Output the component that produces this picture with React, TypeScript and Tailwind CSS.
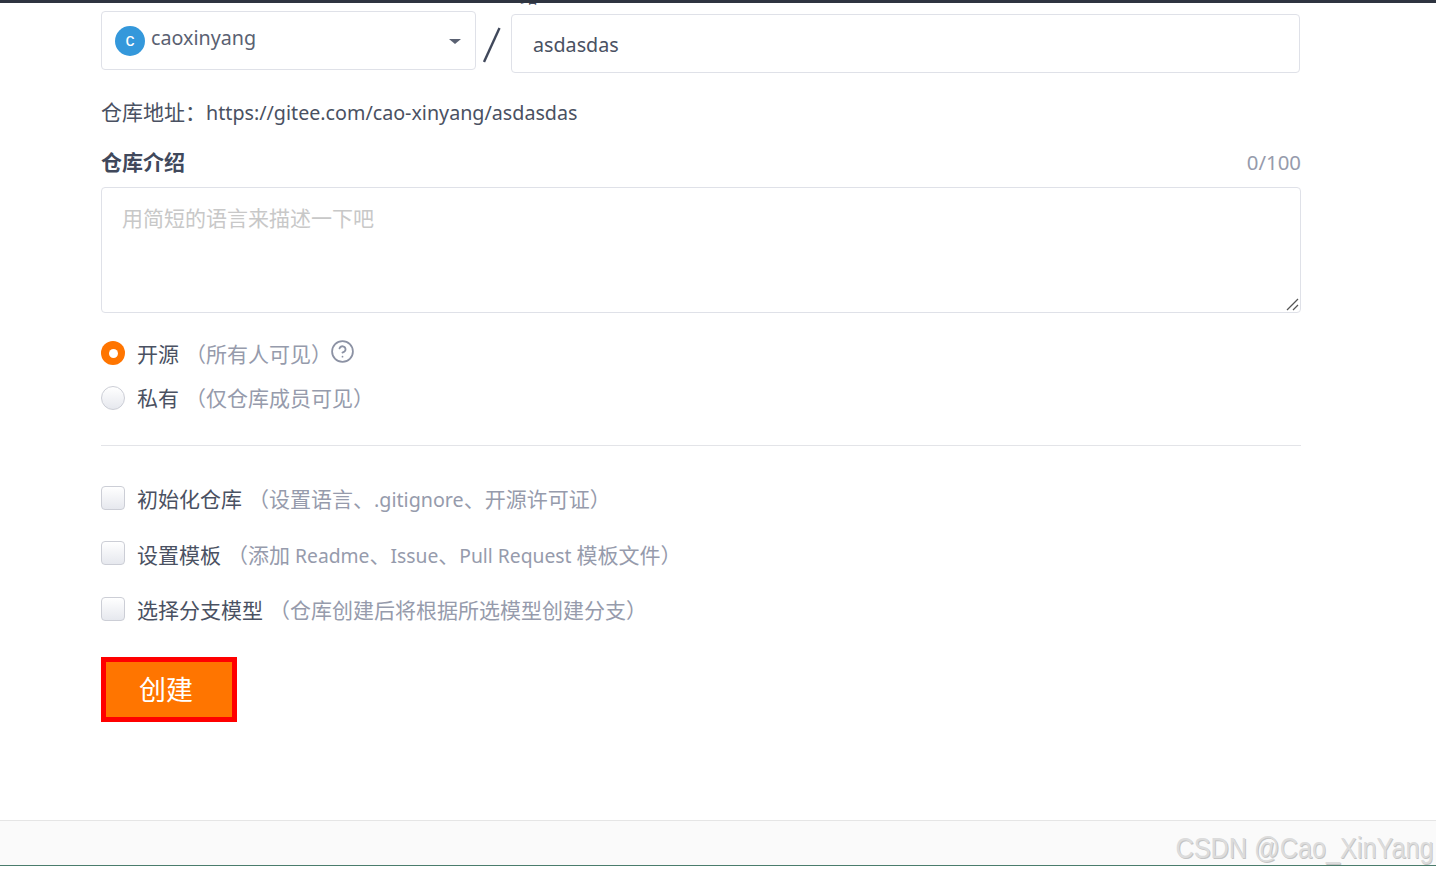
import type { ReactNode } from "react";
import { CircleHelp } from "lucide-react";

const FONT = "font-['Noto_Sans','Noto_Sans_CJK_SC',sans-serif]";

// latin runs sit a bit smaller than the CJK around them
function L({ children }: { children: ReactNode }) {
  return <span className="text-[19.7px]">{children}</span>;
}

function Tight({ children }: { children: ReactNode }) {
  return <span className="text-[19.3px]">{children}</span>;
}

function Radio({ checked, label, hint, help, textClass }: { checked?: boolean; label: string; hint: string; help?: boolean; textClass: string }) {
  return (
    <div className="flex items-center h-[24px]">
      {checked ? (
        <span className="w-[24px] h-[24px] rounded-full bg-[#ff7500] flex items-center justify-center shrink-0">
          <span className="w-[9px] h-[9px] rounded-full bg-white" />
        </span>
      ) : (
        <span className="w-[24px] h-[24px] rounded-full border border-[#ccced6] bg-gradient-to-b from-white to-[#e6e8ee] shrink-0" />
      )}
      <span className={`ml-[12px] text-[21px] text-[#4a5162] ${textClass}`}>{label}</span>
      <span className={`ml-[6px] text-[21px] text-[#969bac] ${textClass}`}>{hint}</span>
      {help && <CircleHelp size={25} strokeWidth={1.7} className="text-[#8c92a4] -ml-[2px] -mt-[3px]" />}
    </div>
  );
}

function Check({ label, children, className, textClass = "mt-[4px]" }: { label: string; children: ReactNode; className?: string; textClass?: string }) {
  return (
    <div className={`flex items-center h-[24px] ${className ?? ""}`}>
      <span className="w-[24px] h-[24px] rounded-[4px] border border-[#ccced6] bg-gradient-to-b from-white to-[#e6e8ee] shrink-0" />
      <span className={`ml-[12px] text-[21px] text-[#4a5162] ${textClass}`}>{label}</span>
      <span className={`ml-[6px] text-[21px] text-[#969bac] whitespace-pre ${textClass}`}>{children}</span>
    </div>
  );
}

export default function App() {
  return (
    <div className={`h-[874px] overflow-hidden bg-white flex flex-col ${FONT}`}>
      <div className="h-[3px] bg-[#2e3440] shrink-0" />

      <main className="flex-1 pl-[101px] overflow-hidden">
        <div className="w-[1200px]">
          <div className="flex items-start pt-[8px]">
            <div className="w-[375px] h-[59px] border border-[#dfe1e8] rounded-[4px] flex items-center pl-[13px] pr-[14px]">
              <span className="w-[30px] h-[30px] rounded-full bg-[#3498db] text-white text-[18px] flex items-center justify-center font-['Liberation_Sans',sans-serif]">
                c
              </span>
              <span className="ml-[6px] text-[19.7px] leading-none text-[#5a6172] -mt-[6px]">caoxinyang</span>
              <span className="ml-auto w-0 h-0 border-x-[6px] border-x-transparent border-t-[5px] border-t-[#5a6172] mt-[1px]" />
            </div>
            <div className="w-[35px] h-[59px] flex items-center justify-start pl-[7px]">
              <svg width="18" height="38" viewBox="0 0 18 38" className="mt-[9px]">
                <line x1="16.5" y1="2" x2="1" y2="36" stroke="#40485b" strokeWidth="2.4" />
              </svg>
            </div>
            <div className="relative w-[789px] h-[59px] mt-[3px] border border-[#dfe1e8] rounded-[4px] flex items-center pl-[21px] pt-[3px] text-[19.7px] text-[#4a5162]">
              <span className="absolute left-[8px] -top-[30px] text-[18px] leading-[22px] text-[#40485b]">路</span>
              asdasdas
            </div>
          </div>

          <p className="mt-[21px] h-[37px] leading-[36px] text-[21px] text-[#4a5162]">
            仓库地址：<L>https://gitee.com/cao-xinyang/asdasdas</L>
          </p>

          <div className="mt-[18px] flex justify-between items-center h-[28px]">
            <span className="text-[21px] font-bold text-[#40485b] -mt-[1px]">仓库介绍</span>
            <span className="text-[20.4px] text-[#969bac] -mt-[2px]">0/100</span>
          </div>

          <div className="relative mt-[10px] h-[126px] border border-[#dfe1e8] rounded-[4px] pl-[20px] pt-[14px] text-[21px] leading-[32px] text-[#c8c8c8]">
            用简短的语言来描述一下吧
            <svg width="13" height="13" viewBox="0 0 13 13" className="absolute right-[1px] bottom-[1px]">
              <path d="M1 12 12 1M7 12l5-5" stroke="#555" strokeWidth="1.3" />
            </svg>
          </div>

          <div className="mt-[28px] flex flex-col gap-[21px]">
            <Radio checked label="开源" hint="（所有人可见）" help textClass="mt-[4px]" />
            <Radio label="私有" hint="（仅仓库成员可见）" textClass="mt-[2px]" />
          </div>

          <div className="mt-[35px] border-t border-[#e3e4e8]" />

          <div className="mt-[40px] flex flex-col gap-[31px]">
            <Check label="初始化仓库">（设置语言、<L>.gitignore</L>、开源许可证）</Check>
            <Check label="设置模板" textClass="mt-[6px]">（添加<Tight> Readme</Tight>、<Tight>Issue</Tight>、<Tight>Pull Request </Tight>模板文件）</Check>
            <Check label="选择分支模型" className="mt-[1px]">（仓库创建后将根据所选模型创建分支）</Check>
          </div>

          <button className="mt-[36px] w-[136px] h-[65px] border-[5px] border-[#ff0000] bg-[#ff7500] text-white text-[27px] flex items-center justify-center pr-[6px] pt-[1px]">
            创建
          </button>
        </div>
      </main>

      <footer className="relative h-[45px] shrink-0 border-t border-[#e5e5e5] bg-[#fafafa]">
        <span className="absolute right-[3px] top-[9px] origin-right scale-x-[0.87] text-[29px] leading-[36px] text-[#dcdcdc] font-['Liberation_Sans',sans-serif] whitespace-nowrap [text-shadow:1px_1px_0_#c4c4c4]">
          CSDN @Cao_XinYang
        </span>
      </footer>
      <div className="h-[1px] bg-[#4a7c6c] shrink-0" />
      <div className="h-[8px] bg-white shrink-0" />
    </div>
  );
}
